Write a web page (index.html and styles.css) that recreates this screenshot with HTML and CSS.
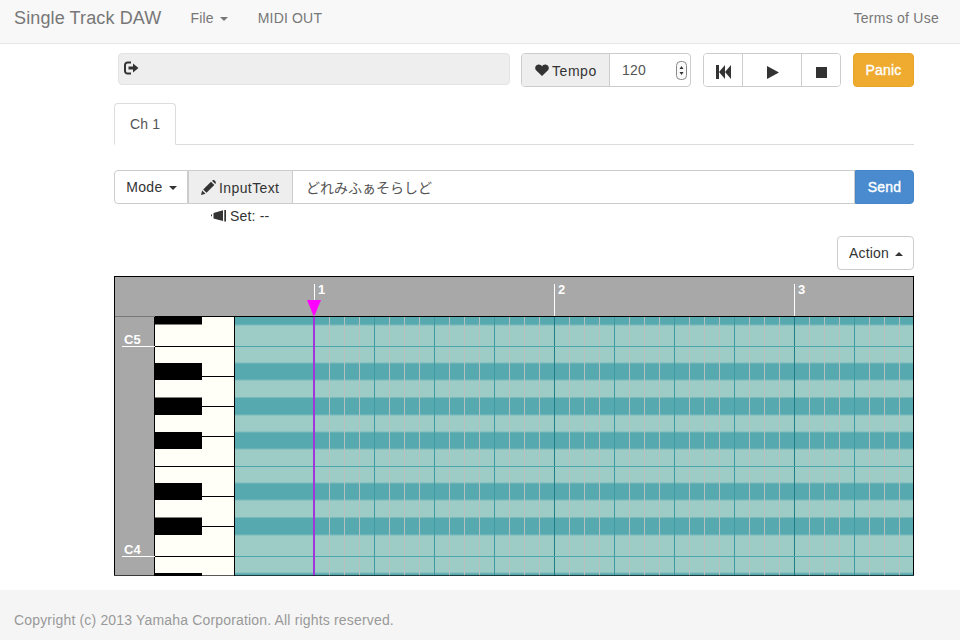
FILE: index.html
```html
<!DOCTYPE html>
<html lang="ja">
<head>
<meta charset="utf-8">
<title>Single Track DAW</title>
<link rel="stylesheet" href="styles.css">
</head>
<body>
<nav class="navbar">
  <a class="brand">Single Track DAW</a>
  <a class="nav-link nav-file">File <span class="caret"></span></a>
  <a class="nav-link nav-midi">MIDI OUT</a>
  <a class="nav-link nav-terms">Terms of Use</a>
</nav>
<main class="content">
  <div class="transport">
    <div class="path-well">
      <svg class="ico-logout" viewBox="0 0 15 14"><path d="M7 1.500H3.500A2.500 2.500 0 0 0 1 4v6a2.500 2.500 0 0 0 2.500 2.500H7" fill="none" stroke="#333" stroke-width="2"/><path d="M4.500 5.500H9V2.500L14.500 7 9 11.500V8.500H4.500Z" fill="#333"/></svg>
    </div>
    <div class="tempo">
      <span class="tempo-label"><svg class="ico-heart" viewBox="0 0 14 12"><path d="M7 12 1 6.200C-.6 4.400.1 1 3.400.6 5 .4 6.300 1.200 7 2.400 7.700 1.200 9 .4 10.600.6 13.900 1 14.600 4.400 13 6.200Z" fill="#333"/></svg><span class="tempo-text">Tempo</span></span>
      <span class="tempo-field">120
        <svg class="ico-spin" viewBox="0 0 11 19"><rect x=".5" y=".5" width="10" height="18" rx="4" fill="#fafafa" stroke="#888"/><path d="M5.500 5 3.500 8H7.500ZM5.500 14 3.500 11H7.500Z" fill="#333"/></svg>
      </span>
    </div>
    <div class="player">
      <button class="player-btn btn-rew"><svg width="15" height="14" viewBox="0 0 15 14"><path d="M0 0H3V14H0ZM3 7 9 0V14ZM9 7 15 0V14Z" fill="#333"/></svg></button>
      <button class="player-btn btn-play"><svg width="12" height="13" viewBox="0 0 12 13"><path d="M0 0 12 6.500 0 13Z" fill="#333"/></svg></button>
      <button class="player-btn btn-stop"><svg width="11" height="11" viewBox="0 0 11 11"><path d="M0 0H11V11H0Z" fill="#333"/></svg></button>
    </div>
    <button class="panic">Panic</button>
  </div>

  <div class="tabs"><a class="tab">Ch 1</a></div>

  <div class="input-group">
    <button class="mode">Mode <span class="caret"></span></button>
    <span class="input-label"><svg class="ico-pencil" viewBox="0 0 15 15"><path d="M0 15 1.200 10.500 4.500 13.800ZM2.200 9.500 10 1.700 13.300 5 5.500 12.800ZM11 .7C12-.2 13-.2 14 .8S15.200 3 14.300 4Z" fill="#333"/></svg><span class="input-text">InputText</span></span>
    <span class="text-field">どれみふぁそらしど</span>
    <button class="send">Send</button>
  </div>

  <div class="set-line"><svg class="ico-horn" viewBox="0 0 15 12"><path d="M0 4.500H1V6.200H0ZM2.500 3 12 .3V11L2.500 8.500ZM13.300 0H15V11.500H13.300Z" fill="#333"/></svg>Set: --</div>

  <div class="action-row"><button class="action">Action <span class="caret caret-up"></span></button></div>

  <div class="roll">
    <svg class="roll-canvas" width="800" height="300" viewBox="0 0 800 300">
      <defs>
        <pattern id="rows" patternUnits="userSpaceOnUse" x="0" y="31.500" width="10" height="210">
          <rect width="10" height="210" fill="#9dcbc6"/>
          <rect y="0" width="10" height="17.500" fill="#57a9b0"/>
          <rect y="55.500" width="10" height="17" fill="#57a9b0"/>
          <rect y="90" width="10" height="17.500" fill="#57a9b0"/>
          <rect y="124.500" width="10" height="17" fill="#57a9b0"/>
          <rect y="175.500" width="10" height="17" fill="#57a9b0"/>
        </pattern>
        <pattern id="beats" patternUnits="userSpaceOnUse" x="200" y="0" width="240" height="300">
          <path d="M15.500 0V300M30.500 0V300M45.500 0V300M75.500 0V300M90.500 0V300M105.500 0V300M135.500 0V300M150.500 0V300M165.500 0V300M195.500 0V300M210.500 0V300M225.500 0V300" stroke="#b9bfbe"/>
          <path d="M60.500 0V300M120.500 0V300M180.500 0V300" stroke="#3f9aa2"/>
          <path d="M.5 0V300" stroke="#1f7d87"/>
        </pattern>
      </defs>
      <rect class="header-bg" width="800" height="300"/>
      <rect x="120" y="40" width="680" height="260" fill="url(#rows)"/>
      <rect x="200" y="41" width="600" height="259" fill="url(#beats)"/>
      <path d="M120 70.500H800M120 190.500H800M120 280.500H800" stroke="#4ea6ad"/>

      <rect x="41" y="41" width="79" height="259" fill="#fffff8"/>
      <path class="bk" d="M41 41H88V48.500H41ZM41 87H88V104H41ZM41 121.500H88V139H41ZM41 156H88V173H41ZM41 207H88V224H41ZM41 241.500H88V259H41ZM41 297H88V300H41Z"/>
      <path d="M41 70.500H120M41 190.500H120M41 280.500H120M88 100.500H120M88 130.500H120M88 160.500H120M88 220.500H120M88 250.500H120" stroke="#000"/>
      <path d="M40.500 40V300M120.500 40V300" stroke="#000"/>
      <path d="M0 40.500H800" stroke="#000"/>
      <path d="M1 40.500H41" stroke="#777"/>

      <path d="M8 70.500H41M8 280.500H41" stroke="#fff"/>
      <text class="roll-label" x="10" y="68">C5</text>
      <text class="roll-label" x="10" y="278">C4</text>

      <path d="M200.500 8V40M440.500 8V40M680.500 8V40" stroke="#fff"/>
      <text class="roll-label" x="204" y="18">1</text>
      <text class="roll-label" x="444" y="18">2</text>
      <text class="roll-label" x="684" y="18">3</text>

      <path d="M199 41H201V300H199Z" fill="#a334dc"/>
      <path d="M193 24H207L200 41Z" fill="#f0f"/>

      <path d="M0 299.500H800" stroke="#000" stroke-opacity=".65"/>
      <path d="M.5 0V299M799.500 0V299M0 .5H800" stroke="#000"/>
    </svg>
  </div>
</main>
<footer class="footer">Copyright (c) 2013 Yamaha Corporation. All rights reserved.</footer>
</body>
</html>
```
FILE: styles.css
```css
* { box-sizing: border-box; }
html, body { margin: 0; padding: 0; }
body {
  display: flex;
  flex-direction: column;
  min-height: 640px;
  height: 640px;
  overflow: hidden;
  background: #fff;
  color: #333;
  font: 14px/20px "Liberation Sans", "Noto Sans CJK JP", sans-serif;
  letter-spacing: .17px;
}
button { font: inherit; letter-spacing: inherit; margin: 0; color: inherit; background: #fff; }

.navbar {
  display: flex;
  align-items: center;
  flex: none;
  height: 44px;
  padding: 0 21px 7px 14px;
  background: #f8f8f8;
  border-bottom: 1px solid #e7e7e7;
  color: #777;
}
.brand { font-size: 18px; margin-right: 29px; letter-spacing: .13px; }
.nav-midi { margin-left: 30px; }
.nav-terms { margin-left: auto; letter-spacing: .25px; }
.caret {
  display: inline-block;
  width: 0;
  height: 0;
  margin-left: 2px;
  vertical-align: middle;
  border-top: 4px solid currentColor;
  border-left: 4px solid transparent;
  border-right: 4px solid transparent;
}
.caret-up { border-top: 0; border-bottom: 4px solid currentColor; }

.content { flex: 1; padding: 9px 46px 0 114px; }

.transport { display: flex; align-items: flex-start; padding-left: 4px; }
.path-well {
  display: flex;
  align-items: center;
  width: 392px;
  height: 32px;
  padding: 0 0 3px 5px;
  background: #eee;
  border: 1px solid #e3e3e3;
  border-radius: 4px;
}
.ico-logout { width: 15px; height: 14px; }

.tempo {
  display: flex;
  width: 170px;
  height: 34px;
  margin-left: 11px;
  border: 1px solid #ccc;
  border-radius: 4px;
  overflow: hidden;
}
.tempo-label {
  display: flex;
  align-items: center;
  width: 88px;
  padding-left: 13px;
  background: #eee;
  border-right: 1px solid #ccc;
}
.tempo-text { padding-top: 2px; letter-spacing: .55px; }
.ico-heart { width: 14px; height: 12px; margin-right: 3px; }
.tempo-field { display: flex; flex: 1; align-items: center; padding: 0 3px 0 12px; justify-content: space-between; color: #555; }
.ico-spin { width: 11px; height: 19px; }

.player {
  display: flex;
  width: 138px;
  height: 34px;
  margin-left: 12px;
  border: 1px solid #ccc;
  border-radius: 4px;
  overflow: hidden;
}
.player-btn { display: flex; align-items: center; justify-content: center; padding: 4px 0 0; border: 0; border-left: 1px solid #ccc; }
.btn-rew { width: 38px; border-left: 0; }
.btn-play { width: 59px; padding-left: 2px; }
.btn-stop { width: 39px; }

.panic {
  width: 61px;
  height: 34px;
  margin-left: 12px;
  padding: 0;
  background: #eeab2f;
  border: 1px solid #e9a525;
  border-radius: 4px;
  color: #fff;
  -webkit-text-stroke: .35px #fff;
}

.tabs { height: 42px; margin-top: 16px; border-bottom: 1px solid #ddd; }
.tab {
  display: inline-block;
  height: 42px;
  padding: 10px 15px;
  background: #fff;
  border: 1px solid #ddd;
  border-bottom-color: #fff;
  border-radius: 4px 4px 0 0;
  color: #555;
}

.input-group { display: flex; height: 34px; margin-top: 25px; }
.mode {
  width: 74px;
  padding: 0 0 0 1px;
  border: 1px solid #ccc;
  border-radius: 4px 0 0 4px;
  letter-spacing: .3px;
}
.input-label {
  display: flex;
  align-items: center;
  width: 104px;
  padding-left: 12px;
  background: #eee;
  border: 1px solid #ccc;
  border-right: 0;
}
.input-text { padding-top: 2px; letter-spacing: .4px; }
.ico-pencil { width: 15px; height: 15px; margin-right: 3px; }
.text-field {
  flex: 1;
  padding: 6px 13px;
  border: 1px solid #ccc;
  color: #555;
  font-family: "Noto Sans CJK JP", sans-serif;
  font-size: 14px;
  letter-spacing: 0;
}
.send {
  width: 59px;
  padding: 0;
  background: #4a8bcf;
  border: 1px solid #4585c8;
  border-radius: 0 4px 4px 0;
  color: #fff;
  -webkit-text-stroke: .35px #fff;
}

.set-line { display: flex; align-items: center; height: 20px; margin: 2px 0 0 97px; }
.ico-horn { width: 15px; height: 12px; margin-right: 4px; }

.action-row { display: flex; justify-content: flex-end; margin-top: 10px; }
.action {
  width: 77px;
  height: 34px;
  padding: 0 0 0 1px;
  border: 1px solid #ccc;
  border-radius: 4px;
}

.roll { height: 300px; margin-top: 6px; }
.roll-canvas { display: block; }
.header-bg { fill: #a8a8a8; }
.bk { fill: #000; }
.roll-label { fill: #fff; font: bold 13px "Liberation Sans", sans-serif; letter-spacing: 0; }

.footer {
  flex: none;
  height: 50px;
  padding: 20px 14px 0;
  background: #f5f5f5;
  color: #999;
}
```
